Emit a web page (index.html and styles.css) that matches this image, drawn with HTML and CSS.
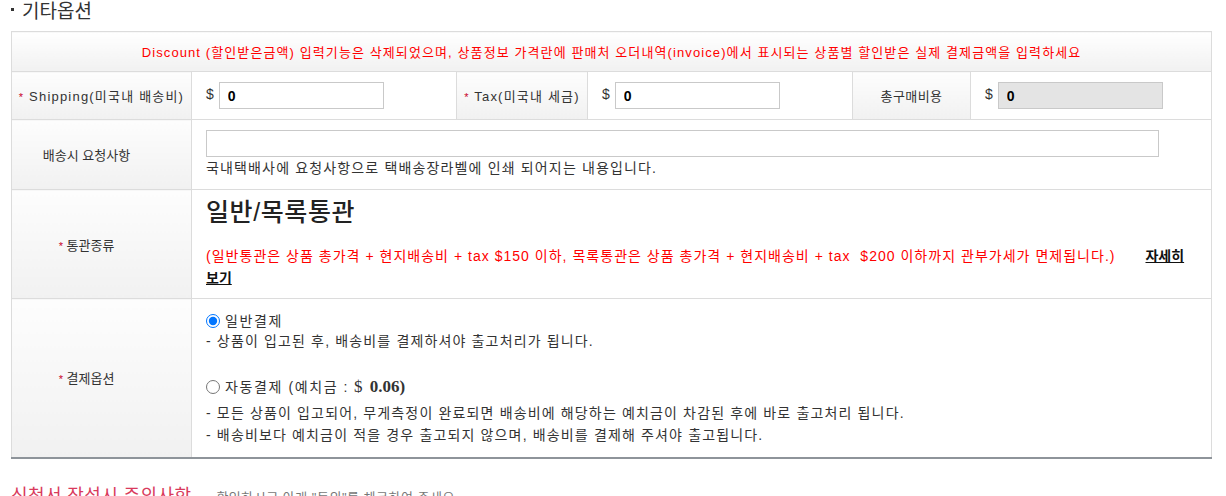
FILE: index.html
```html
<!DOCTYPE html>
<html lang="ko">
<head>
<meta charset="utf-8">
<link rel="stylesheet" href="styles.css">
</head>
<body>
<div class="page">
  <h2 class="section-title"><span class="dot"></span>기타옵션</h2>
  <table class="opt-table">
    <colgroup>
      <col class="c1"><col class="c2"><col class="c3"><col class="c4"><col class="c5"><col class="c6">
    </colgroup>
    <tr class="row-notice">
      <td colspan="6" class="notice">Discount (할인받은금액) 입력기능은 삭제되었으며, 상품정보 가격란에 판매처 오더내역(invoice)에서 표시되는 상품별 할인받은 실제 결제금액을 입력하세요</td>
    </tr>
    <tr class="row-cost">
      <th class="wide-lbl"><span class="req">*</span> Shipping(미국내 배송비)</th>
      <td class="val"><span class="cur">$</span><input class="num" type="text" value="0"></td>
      <th class="wide-lbl"><span class="req">*</span> Tax(미국내 세금)</th>
      <td class="val"><span class="cur">$</span><input class="num" type="text" value="0"></td>
      <th>총구매비용</th>
      <td class="val"><span class="cur">$</span><input class="num ro" type="text" value="0" readonly></td>
    </tr>
    <tr class="row-req">
      <th class="side-lbl">배송시 요청사항</th>
      <td colspan="5" class="val">
        <input class="wide" type="text">
        <p class="hint">국내택배사에 요청사항으로 택배송장라벨에 인쇄 되어지는 내용입니다.</p>
      </td>
    </tr>
    <tr class="row-customs">
      <th class="side-lbl"><span class="req">*</span> 통관종류</th>
      <td colspan="5" class="val">
        <div class="customs-type">일반/목록통관</div>
        <p class="customs-note"><span class="red">(일반통관은 상품 총가격 + 현지배송비 + tax $150 이하, 목록통관은 상품 총가격 + 현지배송비 + tax &nbsp;$200 이하까지 관부가세가 면제됩니다.)</span><a class="more" href="#">자세히<br>보기</a></p>
      </td>
    </tr>
    <tr class="row-pay">
      <th class="side-lbl"><span class="req">*</span> 결제옵션</th>
      <td colspan="5" class="val">
        <label class="radio"><input type="radio" name="pay" checked> 일반결제</label>
        <p class="desc">- 상품이 입고된 후, 배송비를 결제하셔야 출고처리가 됩니다.</p>
        <label class="radio radio2"><input type="radio" name="pay"> 자동결제 (예치금 : <span class="amt">$ <b>0.06)</b></span></label>
        <p class="desc desc2">- 모든 상품이 입고되어, 무게측정이 완료되면 배송비에 해당하는 예치금이 차감된 후에 바로 출고처리 됩니다.</p>
        <p class="desc">- 배송비보다 예치금이 적을 경우 출고되지 않으며, 배송비를 결제해 주셔야 출고됩니다.</p>
      </td>
    </tr>
  </table>
  <div class="notice-head">
    <h3 class="notice-title">신청서 작성시 주의사항</h3>
    <span class="notice-sub">확인하시고 아래 "동의"를 체크하여 주세요.</span>
  </div>
</div>
</body>
</html>
```
FILE: styles.css
```css
* { box-sizing: border-box; }
html, body { margin: 0; padding: 0; background: #fff; }
body {
  font-family: "Liberation Sans", "Noto Sans CJK KR", sans-serif;
  font-size: 13px;
  color: #333;
}
.page { padding: 0 16px 0 11px; }
.section-title {
  margin: 0;
  height: 31px;
  font-size: 19px;
  font-weight: normal;
  color: #333;
  line-height: 24px;
  display: flex;
  align-items: flex-start;
}
.section-title .dot {
  display: inline-block;
  width: 3px;
  height: 3px;
  background: #333;
  margin: 8px 8px 0 0;
}
.opt-table {
  width: 1200px;
  table-layout: fixed;
  border-collapse: collapse;
  border: 1px solid #8e949a;
  border-bottom: 2px solid #8e949a;
}
.c1 { width: 180px; }
.c2 { width: 265px; }
.c3 { width: 131px; }
.c4 { width: 265px; }
.c5 { width: 118px; }
.c6 { width: 241px; }
.opt-table th, .opt-table td {
  border: 1px solid #dcdcdc;
  padding: 0;
}
.opt-table th {
  font-weight: normal;
  text-align: center;
  color: #333;
  background: linear-gradient(#fdfdfd, #f1f1f1);
  font-size: 13px;
  letter-spacing: 0.4px;
  white-space: nowrap;
}
.opt-table th.wide-lbl { letter-spacing: 1.2px; }
.opt-table th.side-lbl { padding-right: 30px; letter-spacing: 0; }
.req { color: #c8002a; font-size: 11px; }
.notice {
  height: 40px;
  text-align: center;
  color: #f00;
  font-size: 13px;
  letter-spacing: 1.1px;
  background: linear-gradient(#fff, #f1f1f1);
}
.row-cost td, .row-cost th { height: 48px; }
.val { padding-left: 14px !important; vertical-align: middle; font-size: 14px; letter-spacing: 1.15px; }
.cur { color: #333; font-size: 14px; margin-right: 5px; letter-spacing: 0; }
.num {
  width: 165px;
  height: 27px;
  border: 1px solid #c9c9c9;
  padding: 0 8px;
  font: bold 14px "Liberation Sans", sans-serif;
  color: #000;
  vertical-align: middle;
}
.num.ro { background: #e4e4e4; }
.row-req th, .row-req td { height: 70px; }
.row-req .val { padding-top: 10px !important; vertical-align: top; }
.wide {
  width: 953px;
  height: 27px;
  border: 1px solid #c9c9c9;
  display: block;
}
.hint { margin: 2px 0 0; line-height: 18px; }
.row-customs th, .row-customs td { height: 109px; }
.row-customs .val { vertical-align: top; padding-top: 6px !important; }
.customs-type {
  font-size: 25px;
  font-weight: 500;
  color: #222;
  line-height: 32px;
  letter-spacing: 0.6px;
}
.customs-note { margin: 17px 0 0; line-height: 22px; letter-spacing: 1.02px; }
.red { color: #f00; }
.more {
  color: #111;
  font-weight: bold;
  text-decoration: underline;
  margin-left: 30px;
  letter-spacing: 0;
}
.row-pay th, .row-pay td { height: 159px; }
.row-pay .val { vertical-align: top; padding-top: 13px !important; }
.radio { display: flex; align-items: center; gap: 5px; font-size: 14px; line-height: 18px; letter-spacing: 1.6px; }
.radio input { margin: 0; width: 14px; height: 14px; }
.radio2 { margin-top: 26px; }
.amt { font-family: "Liberation Serif", serif; font-size: 17px; letter-spacing: 0; }
.amt b { margin-left: 3px; }
.desc { margin: 1px 0 0; line-height: 21px; }
.desc2 { margin-top: 7px; }
.notice-head { display: flex; align-items: baseline; gap: 25px; margin-top: 22px; }
.notice-title { margin: 0; font-size: 18px; color: #d93a5c; font-weight: normal; letter-spacing: 0.4px; }
.notice-sub { color: #777; font-size: 13px; letter-spacing: 0.5px; }
```
